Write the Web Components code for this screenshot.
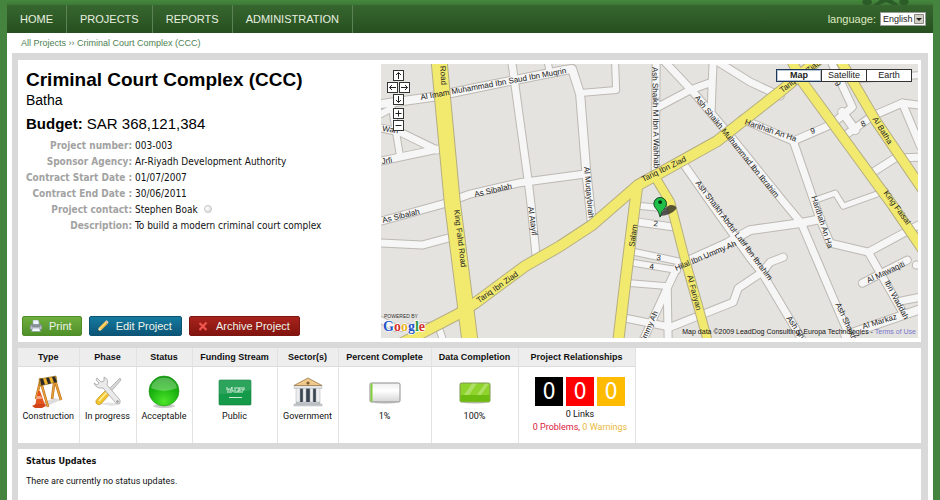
<!DOCTYPE html>
<html lang="en">
<head>
<meta charset="utf-8">
<title>Criminal Court Complex (CCC)</title>
<style>
html { background: #45843e; }
body {
  margin: 0; min-height: 100vh; color: #111;
  --ui: "Liberation Sans", Arial, sans-serif;
  --text: "DejaVu Sans Condensed", Tahoma, "DejaVu Sans", sans-serif;
  --small: Roboto, "Noto Sans", sans-serif;
  font: 9px/12px var(--small);
}
</style>
</head>
<body>
<app-shell>
  <site-nav slot="nav"></site-nav>
  <bread-crumb slot="crumb"></bread-crumb>
  <content-panel>
    <project-summary>
      <project-details slot="details"></project-details>
      <street-map slot="map"></street-map>
    </project-summary>
  </content-panel>
  <content-panel><project-stats></project-stats></content-panel>
  <content-panel fill>
    <status-updates><span slot="title">Status Updates</span>There are currently no status updates.</status-updates>
  </content-panel>
</app-shell>

<script>
function define(name, html) {
  const template = document.createElement('template');
  template.innerHTML = html;
  customElements.define(name, class extends HTMLElement {
    constructor() {
      super();
      this.attachShadow({ mode: 'open' }).append(template.content.cloneNode(true));
    }
  });
}

define('app-shell', `
<style>
:host { display: flex; flex-direction: column; min-height: 100vh; box-sizing: border-box; padding: 0 7px; }
.top { height: 5px; display: flex; justify-content: flex-end; padding-right: 24px; background: linear-gradient(#45893d, #3d7836); }
.page { flex: 1; background: #fff; padding: 0 5px 0 5px; display: flex; flex-direction: column; }
.stack { flex: 1; display: flex; flex-direction: column; gap: 6px; background: #d9d9d9; padding: 7px 7px 0 6px; }
svg { display: block; }
</style>
<div class="top"><svg width="47" height="5" viewBox="0 0 47 5" fill="#2c5c28" aria-hidden="true">
<path d="M1 0h8q3 4-2 5H3Q-1 4 1 0zM38 0h8q2 4-2 5h-4q-4-1-2-5zM18 0h12l7 5h-6l-7-3-7 3h-6z"/></svg></div>
<slot name="nav"></slot>
<div class="page"><slot name="crumb"></slot><div class="stack"><slot></slot></div></div>`);

define('site-nav', `
<style>
:host { display: flex; justify-content: space-between; align-items: center; height: 28px;
  background: linear-gradient(#37662f, #26501f); font-family: var(--ui); color: #e8f0e0; }
nav { display: flex; align-self: stretch; }
a { display: flex; align-items: center; padding: 0 13px; color: inherit; text-decoration: none; font-size: 11px; border-right: 1px solid #5b8355; }
label { display: flex; align-items: center; gap: 4px; font-size: 11px; padding-right: 7px; color: #dfe9c0; }
.box { position: relative; }
select { appearance: none; display: block; width: 46px; height: 14px; margin: 0; padding: 0 0 0 2px; border: 1px solid #9a9a9a;
  border-radius: 0; background: #fff; font: 9px/12px var(--ui); color: #222; }
svg { position: absolute; right: 2px; top: 2px; pointer-events: none; }
</style>
<nav><a href="#home">HOME</a><a href="#projects">PROJECTS</a><a href="#reports">REPORTS</a><a href="#administration">ADMINISTRATION</a></nav>
<label>language: <span class="box"><select><option>English</option><option>Arabic</option></select>
<svg width="10" height="10"><path fill="#d2cec4" stroke="#8c8a84" d="M.5.5h9v9h-9z"/><path d="M2 4h6L5 7z" fill="#222"/></svg></span></label>`);

define('bread-crumb', `
<style>
:host { display: block; height: 20px; padding-left: 9px; font: 9px/21px var(--ui); color: #4d8052; }
a { color: inherit; text-decoration: none; }
</style>
<nav><a href="#all">All Projects</a> ›› <a href="#ccc">Criminal Court Complex (CCC)</a></nav>`);

define('content-panel', `
<style>:host { display: block; background: #fff; } :host([fill]) { flex: 1; }</style><slot></slot>`);

define('project-summary', `
<style>
:host { display: grid; grid-template-columns: minmax(0, 27fr) minmax(0, 40fr); padding: 4px 3px 4px 0; }
</style><slot name="details"></slot><slot name="map"></slot>`);

define('project-details', `
<style>
:host { display: flex; flex-direction: column; justify-content: space-between; }
section { padding: 5px 0 0 8px; font-family: var(--ui); color: #000; }
h1 { margin: 0; font-size: 19px; line-height: 21px; }
.place { font-size: 14px; line-height: 20px; }
.budget { font-size: 15px; line-height: 28px; }
dl { margin: 0; display: grid; grid-template-columns: 106px 1fr; column-gap: 3px; font: 10px/16px var(--text); color: #111; }
dt { text-align: right; font-weight: bold; color: #a2a2a2; white-space: nowrap; }
dd { margin: 0; }
i { display: inline-block; width: 6px; height: 6px; margin-left: 3px; border: 1px solid #c4c4c4; border-radius: 50%; background: radial-gradient(circle at 30% 30%, #fff, #d8d8d8); }
.bar { display: flex; gap: 7px; padding: 0 0 2px 4px; }
</style>
<section>
<h1>Criminal Court Complex (CCC)</h1>
<div class="place">Batha</div>
<div class="budget"><b>Budget:</b> SAR 368,121,384</div>
<dl>
<dt>Project number:</dt><dd>003-003</dd>
<dt>Sponsor Agency:</dt><dd>Ar-Riyadh Development Authority</dd>
<dt>Contract Start Date :</dt><dd>01/07/2007</dd>
<dt>Contract End Date :</dt><dd>30/06/2011</dd>
<dt>Project contact:</dt><dd>Stephen Boak <i></i></dd>
<dt>Description:</dt><dd>To build a modern criminal court complex</dd>
</dl>
</section>
<div class="bar">
<action-button tone="green"><svg slot="icon" width="12" height="12" viewBox="0 0 12 12"><path d="M3 0h5l1 2v3H3z" fill="#eef4fb" stroke="#9ab" stroke-width=".6"/><path d="M1 4.500h10l1 2v3H0v-3z" fill="#b9bfc8" stroke="#6f7b88" stroke-width=".6"/><path d="M1.500 5.500h9v1h-9z" fill="#555f6b"/><path d="M2.500 8h7l1 3.600h-9z" fill="#f3f7fb" stroke="#8a97a5" stroke-width=".6"/></svg>Print</action-button>
<action-button tone="blue"><svg slot="icon" width="12" height="12" viewBox="0 0 12 12"><path d="M1 11l1-3.500L8 1.500 10.500 4l-6 6z" fill="#f2b83c"/><path d="M2.800 8L8.500 2.300l.8.800-5.700 5.700z" fill="#ffe28a"/><path d="M8 1.500l1.300-1.200q1.800.4 2.200 2.300L10.500 4z" fill="#e8c9a0"/><path d="M1 11l1-3.500L4.500 10z" fill="#f6e3c3"/><path d="M.8 11.200l.5-1.500 1 1z" fill="#333"/></svg>Edit Project</action-button>
<action-button tone="red"><svg slot="icon" width="12" height="12" viewBox="0 0 12 12"><path d="M2.500 3L9.500 10M9.500 2.500L2.500 10" stroke="#f0564f" stroke-width="2.200"/></svg>Archive Project</action-button>
</div>`);

define('action-button', `
<style>
:host { display: block; }
button { display: flex; align-items: center; gap: 7px; height: 20px; padding: 0 9px 0 7px; border: 1px solid #4f8c2a; border-radius: 2px;
  background: linear-gradient(#6fae3f, #4f9028); color: #eef3ea; font: 11px/14px var(--ui); white-space: nowrap; }
:host([tone=blue]) button { background: linear-gradient(#157a9f, #0c5578); border-color: #0d5372; }
:host([tone=red]) button { background: linear-gradient(#a8231c, #82140f); border-color: #7d1510; }
</style><button type="button"><slot name="icon"></slot><span><slot></slot></span></button>`);

/* The street map: white and yellow roads drawn as an outline pass under a fill pass. */
const minor = [
  ['M381 104L432 97L480 87L565 70L572 69L580 94L586 170L592 225', 9],
  ['M580 93L616 90L615 64', 7], ['M512 64L528 180L531 205L536 256', 8], ['M548 64L550 74', 7],
  ['M381 221L446 203L470 194L518 183L585 174', 8], ['M381 128L400 132L437 150', 8],
  ['M381 114L392 108L400 156', 7], ['M381 161L400 157L438 149', 8], ['M381 243L422 245L448 238', 8],
  ['M656 64L655 178', 8], ['M663 60L693 92L727 132L782 200L801 223L818 263L850 338', 8],
  ['M658 107L690 90L712 82L713 60M712 82L711 110', 8], ['M718 62L750 82L780 96', 8],
  ['M742 119L793 141L813 199L820 220L830 243L868 252L918 225', 8],
  ['M793 141L832 124L852 107L832 64', 8], ['M842 112L855 130', 9], ['M848 133L872 116L902 103L918 105', 8],
  ['M902 103L920 146', 8], ['M873 172L895 158L920 157', 8], ['M815 200L835 193L843 206L885 191', 6],
  ['M685 262L727 243L750 230L800 223L820 219', 9], ['M682 162L710 202L750 258L762 273L802 340', 8],
  ['M625 318L670 327L733 302L738 288L762 272L770 262L783 257', 8],
  ['M640 206L672 209', 7], ['M638 222L674 227', 8], ['M635 252L682 262', 7], ['M635 263L677 270', 7],
  ['M677 267L667 288L643 340', 8], ['M667 286L668 340', 8], ['M630 283L667 286', 7],
  ['M862 283L907 260', 8], ['M868 252L903 313', 8], ['M845 335L920 309', 9], ['M900 301L920 297', 8],
  ['M860 79L920 75', 7], ['M916 265h8', 8], ['M381 320L396 328L438 325L443 340', 7]
];
const major = [
  ['M439 60L452 200L470 342', 16], ['M400 344L458 314L475 303L525 266L560 246L592 225L638 185L717 141L782 90L820 58', 11],
  ['M637 186L625 283L618 342', 11], ['M655 177L670 202L685 260L708 342', 9],
  ['M791 60L803 83L892 205L922 249', 10], ['M840 60L875 120L922 189', 10]
];
const labels = [
  [440, 66, 86, 'Road'], [421, 100, -10.5, 'Al Imam Muhammad Ibn Saud Ibn Muqrin'], [382, 131, 8, 'Wah'], [382, 164, -9, 'Jrfi'],
  [475, 197, -13, 'As Sibalah'], [383, 223, -14, 'As Sibalah'], [454, 210, 83, 'King Fahd Road'], [528, 207, 82, 'Al Atayif'],
  [479, 303, -35, 'Tariq Ibn Ziad'], [584, 167, 85, 'Al Muqaybirah'], [652, 67, 89, 'Ash Shaikh M Ibn A Wahhab'],
  [643, 182, -26, 'Tariq Ibn Ziad'], [694, 98, 51, 'Ash Shaikh Mulhammad Ibn Ibrahim'], [695, 183, 53, 'Ash Shaikh Abdul Latif Ibn Ibrahim'],
  [744, 124, 19, 'Harithah An Ha'], [782, 93, -37, 'Tariq Ibn Ziad'], [872, 119, 58, 'Al Batha'], [883, 193, 54, 'King Faisal'],
  [811, 197, 72, 'Harithah An Ha'], [634, 247, -82, 'Salam'], [676, 271, -23, 'Hilal Ibn Ummy Ah'], [687, 276, 75, 'Al Fariyan'],
  [868, 283, -25, 'Al Mawaqiti'], [884, 282, 62, 'Ibn Waddah'], [863, 329, -17, 'Al Markaz'], [835, 304, 65, 'Ash Shaikh'],
  [786, 318, 56, 'Ash Shaikh'], [644, 344, -66, 'Ummy Ah'], [811, 134, -15, '9'], [862, 127, -25, '8'], [834, 83, 60, '9'],
  [653, 226, 5, '2'], [656, 260, 5, '3'], [649, 269, 5, '4']
];
const stroke = (list, colour, extra) => list.map(([d, w]) => `<path d="${d}" stroke="${colour}" stroke-width="${w + extra}"/>`).join('');

define('street-map', `
<style>
:host { display: block; position: relative; aspect-ratio: 537 / 274; overflow: hidden; background: #e5e3df; font-family: var(--ui); }
.canvas { display: block; width: 100%; height: 100%; font-size: 8px; }
.pan { position: absolute; left: 6px; top: 6px; display: grid; grid-template-columns: 11px 11px; gap: 1px; }
.pan button { width: 11px; height: 11px; padding: 0; border: 1px solid #333; background: #fff; display: grid; place-items: center; }
.wide { grid-column: 1 / 3; justify-self: center; }
.zoom { margin-top: 2px; }
.types { position: absolute; right: 6px; top: 5px; display: flex; }
.types button { width: 46px; height: 13px; margin-left: -1px; padding: 0; border: 1px solid #333; background: #fff; color: #222; font: 9px/11px var(--ui); }
.types .on { font-weight: bold; border-color: #1d3557; box-shadow: inset 0 0 0 1px #b9c6d6; }
.credit { position: absolute; right: 2px; bottom: 1px; font-size: 7px; line-height: 10px; white-space: nowrap; }
.credit a { color: #7777cc; text-decoration: none; }
</style>
<svg class="canvas" viewBox="381 64 537 274" preserveAspectRatio="xMidYMid slice" role="img" aria-label="Street map">
<g fill="none" stroke-linejoin="round" stroke-linecap="round">
${stroke(minor, '#bdb9b3', 1)}${stroke(minor, '#f6f6f6', -1)}${stroke(major, '#b5ae84', 1)}${stroke(major, '#f2ea6e', -1)}
</g>
<g fill="#222">${labels.map(([x, y, a, t]) => `<text transform="translate(${x} ${y}) rotate(${a})">${t}</text>`).join('')}</g>
<path d="M660 216Q664 207 670 205Q677 205 676 209Q671 215 660 216z" fill="#222" opacity=".75"/>
<path d="M660 217Q659 211 655 207.500A6.300 6.300 0 1 1 665 207.500Q661 211 660 217z" fill="#1fbf4a" stroke="#0a3b14" stroke-width=".9"/>
<circle cx="660" cy="202" r="1.900" fill="#062c0d"/>
<text x="384" y="318" font-size="5" fill="#333">POWERED BY</text>
<text x="383" y="331" font-size="14" font-weight="bold" font-family="Liberation Serif, serif" stroke="#fff" stroke-width="1.500" paint-order="stroke"><tspan fill="#2554c7">G</tspan><tspan fill="#d5302b">o</tspan><tspan fill="#e8b41c">o</tspan><tspan fill="#2554c7">g</tspan><tspan fill="#2c9b3c">l</tspan><tspan fill="#d5302b">e</tspan></text>
</svg>
<div class="pan">
<button class="wide" aria-label="Pan up"><svg width="9" height="9"><path d="M4.500 8V1.500M2 4L4.500 1.500 7 4" fill="none" stroke="#222"/></svg></button>
<button aria-label="Pan left"><svg width="9" height="9"><path d="M8 4.500H1.500M4 2L1.500 4.500 4 7" fill="none" stroke="#222"/></svg></button>
<button aria-label="Pan right"><svg width="9" height="9"><path d="M1 4.500h6.500M5 2l2.500 2.500L5 7" fill="none" stroke="#222"/></svg></button>
<button class="wide" aria-label="Pan down"><svg width="9" height="9"><path d="M4.500 1v6.500M2 5l2.500 2.500L7 5" fill="none" stroke="#222"/></svg></button>
<button class="wide zoom" aria-label="Zoom in"><svg width="9" height="9"><path d="M4.500 1.500v6M1.500 4.500h6" stroke="#222"/></svg></button>
<button class="wide" aria-label="Zoom out"><svg width="9" height="9"><path d="M1.500 4.500h6" stroke="#222"/></svg></button>
</div>
<div class="types"><button class="on">Map</button><button>Satellite</button><button>Earth</button></div>
<div class="credit">Map data ©2009 LeadDog Consulting, Europa Technologies - <a href="#terms">Terms of Use</a></div>`);

define('project-stats', `
<style>
:host { display: block; }
table { border-collapse: collapse; table-layout: fixed; width: 617px; }
th, td { padding: 0; text-align: center; border-right: 1px solid #e2e2e2; }
th { height: 18px; background: #ededed; border-bottom: 1px solid #dcdcdc; font: bold 9px/18px var(--ui); white-space: nowrap; }
td { height: 76px; vertical-align: top; }
svg { display: block; margin: 8px auto 1px; }
.links { padding-left: 7px; }
.counts { display: flex; justify-content: center; gap: 3px; padding: 10px 0 2px; }
.counts b { width: 28px; font: 23px/29px var(--text); color: #fff; background: #000; }
.counts b + b { background: #f00; }
.counts b + b + b { background: #fb0; }
.sum { line-height: 13px; }
.bad { color: #d8203c; } .warn { color: #e8b93c; }
</style>
<table>
<colgroup><col style="width:61px"><col style="width:57px"><col style="width:56px"><col style="width:85px"><col style="width:61px"><col style="width:93px"><col style="width:87px"><col style="width:117px"></colgroup>
<thead><tr><th>Type</th><th>Phase</th><th>Status</th><th>Funding Stream</th><th>Sector(s)</th><th>Percent Complete</th><th>Data Completion</th><th>Project Relationships</th></tr></thead>
<tbody><tr>
<td><svg width="32" height="34" viewBox="0 0 32 34"><path d="M8 28l15-5 6 2-14 6z" fill="#ddd"/>
<g fill="none" stroke="#b86f16" stroke-width="2.600"><path d="M9 3L4 24M8 4l8 28M23 2l-3 22M22 2l7 23"/></g><g fill="none" stroke="#eaa03c" stroke-width="1.400"><path d="M9 3L4 24M8 4l8 28M23 2l-3 22M22 2l7 23"/></g>
<path d="M7 4L24 1l1 6L8 11z" fill="#f0b52c" stroke="#6a4a10" stroke-width=".5"/><path d="M8 4l3-.500 2 6-4 .800zM14 3l3-.600 2 6-3 .600zM20 2l3-.500 2 5.500-3 .800z" fill="#2c2a28"/>
<path d="M3 31l3-15h2l5 14z" fill="#e4551e"/><path d="M0 31l4-2 9 0 1 2-4 2H3z" fill="#d04418"/><path d="M5 21h4l1 3H4z" fill="#f4a583"/></svg>Construction</td>
<td><svg width="32" height="34" viewBox="0 0 32 34"><path d="M7 29q9-3 22 0l-9 2z" fill="#e4e4e4"/>
<path d="M28 3l1 2-12 14-3-2z" fill="#d7d7d7" stroke="#999" stroke-width=".6"/><path d="M14 15l4 4-9 10q-3 2-5-1-1-2 2-5z" fill="#f1c430" stroke="#b78a16" stroke-width=".6"/><path d="M7 26l8-9" stroke="#fff0a0" stroke-width="1.500"/>
<path d="M5 3l4 4 3-1 0-4q5 2 3 8l13 15q1 4-2 4-2 0-3-2L11 13q-7 1-9-5l3 2 2-2-3-3z" fill="#eaeaea" stroke="#9a9a9a" stroke-width=".7"/><circle cx="25.500" cy="26.500" r="1.200" fill="#999"/></svg>In progress</td>
<td><svg width="32" height="34" viewBox="0 0 32 34"><defs><radialGradient id="ball" cx=".5" cy=".85" r=".8"><stop offset="0" stop-color="#4ee52a"/><stop offset=".6" stop-color="#1cb512"/><stop offset="1" stop-color="#119a0e"/></radialGradient></defs><ellipse cx="16" cy="31" rx="11" ry="2" fill="#ccc"/><circle cx="16" cy="16" r="15" fill="url(#ball)" stroke="#159510" stroke-width=".6"/><path d="M3 13Q5 3 16 2.500 27 3 29 13 16 19 3 13z" fill="#fff" opacity=".28"/></svg>Acceptable</td>
<td><svg width="34" height="34" viewBox="0 0 34 34"><rect x="1" y="5" width="32" height="25" rx="1" fill="#159a4a" stroke="#0d7c39" stroke-width=".6"/><path d="M1 5h32v10Q17 19 1 19z" fill="#fff" opacity=".1"/><g stroke="#e3f5e9" stroke-width=".9" fill="none"><path d="M9 12v3h2v-2M12 16l2-4v4h2M17 12v4M18 13h3v3h-2M22 12v4M24 12v3h2v-3M9 17h5M16 17h9M11 22.500h13"/></g></svg>Public</td>
<td><svg width="32" height="34" viewBox="0 0 32 34"><path d="M2 29h28v2H2zM4 27h24v2H4z" fill="#cfd2d6" stroke="#9a9da2" stroke-width=".4"/><path d="M5 13h22v14H5z" fill="#3a4350"/><g fill="#eceef0" stroke="#a9adb3" stroke-width=".5"><path d="M4 12h4v15H4zM11 12h3v15h-3zM18 12h3v15h-3zM24 12h4v15h-4z"/></g><path d="M2 10.500h28v3H2z" fill="#e3e5e8" stroke="#a0a3a8" stroke-width=".4"/><path d="M16 3l14 7.500H2z" fill="#efc98a" stroke="#9b7a4b" stroke-width=".8"/><circle cx="16" cy="8" r="1.600" fill="#7d5c31"/></svg>Government</td>
<td><svg width="32" height="34" viewBox="0 0 32 34"><defs><linearGradient id="grey" x2="0" y2="1"><stop offset="0" stop-color="#eee"/><stop offset=".4" stop-color="#fff"/><stop offset="1" stop-color="#d5d5d5"/></linearGradient></defs><ellipse cx="16" cy="27.500" rx="11" ry="1.500" fill="#ddd"/><rect x="1" y="8" width="30" height="19" rx="1.500" fill="url(#grey)" stroke="#8d8d8d"/><path d="M1.500 8.500h2v18h-2z" fill="#84d03c"/></svg>1%</td>
<td><svg width="32" height="34" viewBox="0 0 32 34"><ellipse cx="16" cy="27.500" rx="11" ry="1.500" fill="#ddd"/><rect x="1" y="8" width="30" height="19" rx="1.500" fill="#8fd42c" stroke="#7d9455"/><path d="M1.500 20h29v6.500h-29z" fill="#6cbd10"/><path d="M5 20L13 8.500h5L10 20zM18 20l8-11.500h4L22 20z" fill="#fff" opacity=".28"/></svg>100%</td>
<td class="links"><div class="counts"><b>0</b><b>0</b><b>0</b></div><div class="sum">0 Links</div><div class="sum"><span class="bad">0 Problems,</span> <span class="warn">0 Warnings</span></div></td>
</tr></tbody></table>`);

define('status-updates', `
<style>
:host { display: block; padding: 6px 8px; }
h2 { margin: 0 0 7px; font: bold 9px/13px var(--text); }
p { margin: 0; }
</style><h2><slot name="title"></slot></h2><p><slot></slot></p>`);
</script>
</body>
</html>
